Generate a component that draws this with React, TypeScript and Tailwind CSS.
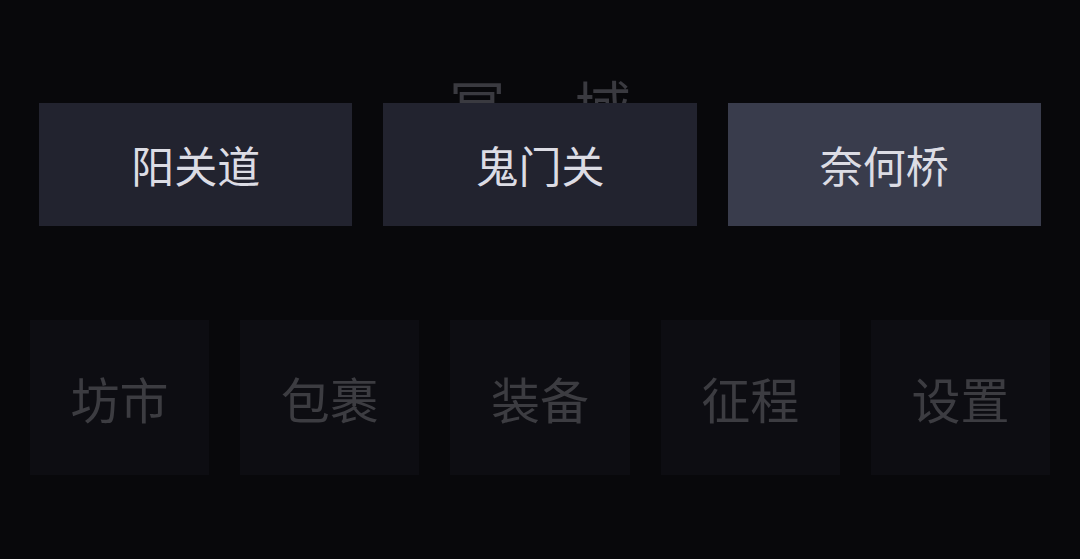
const font = {
  fontFamily: '"Noto Sans CJK SC", "Noto Sans", sans-serif',
};

const routes = [
  { name: "阳关道", active: false },
  { name: "鬼门关", active: false },
  { name: "奈何桥", active: true },
];

const menu = ["坊市", "包裹", "装备", "征程", "设置"];

export default function App() {
  return (
    <div
      className="h-[559px] w-[1080px] overflow-hidden bg-[#08080b]"
      style={font}
    >
      <section className="px-[39px] pt-[76px]">
        <h1 className="h-[27px] text-center text-[56px] leading-none tracking-[70px] pl-[70px] text-[#3a3a40]">
          冥域
        </h1>
        <div className="relative grid grid-cols-3 gap-[31px]">
          {routes.map((r) => (
            <button
              key={r.name}
              className={`flex h-[123px] items-center justify-center text-[43px] leading-none text-[#dcdce4] ${
                r.active ? "bg-[#393c4c]" : "bg-[#22232f]"
              }`}
            >
              {r.name}
            </button>
          ))}
        </div>
      </section>

      <nav className="mt-[94px] grid grid-cols-5 gap-[31px] px-[30px]">
        {menu.map((m) => (
          <button
            key={m}
            className="flex h-[155px] items-center justify-center bg-[#0d0d12] text-[49px] leading-none text-[#3c3c41]"
          >
            {m}
          </button>
        ))}
      </nav>
    </div>
  );
}
